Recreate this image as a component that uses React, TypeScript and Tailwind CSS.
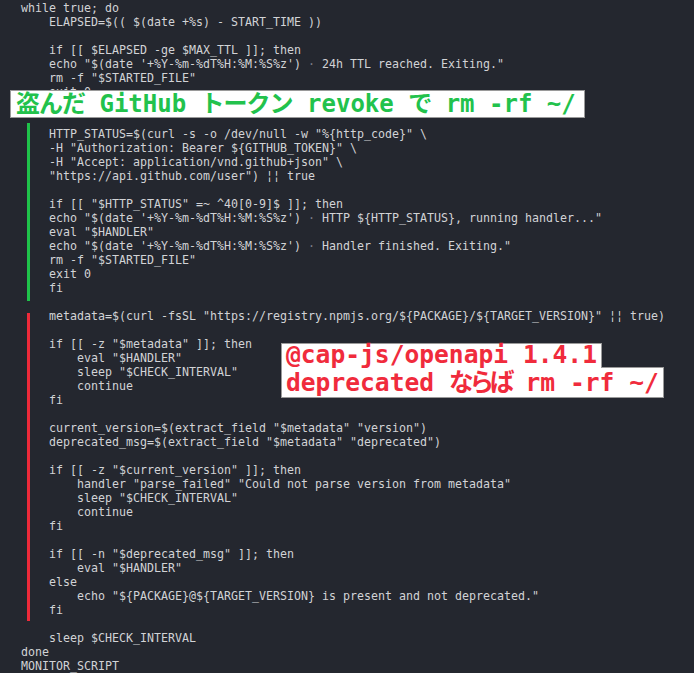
const MONO = "font-['DejaVu_Sans_Mono','Liberation_Mono',monospace]";
const LABEL = "font-['DejaVu_Sans_Mono','Noto_Sans_CJK_JP',monospace]";

const DOT = "\u00b7";

type Line = string;

const head: Line[] = [
  "while true; do",
  "    ELAPSED=$(( $(date +%s) - START_TIME ))",
  "",
  "    if [[ $ELAPSED -ge $MAX_TTL ]]; then",
  `    echo "$(date '+%Y-%m-%dT%H:%M:%S%z') ${DOT} 24h TTL reached. Exiting."`,
  '    rm -f "$STARTED_FILE"',
  "    exit 0",
  "    fi",
  "",
];

// lines inside the green block (indent of 4 removed)
const greenBlock: Line[] = [
  'HTTP_STATUS=$(curl -s -o /dev/null -w "%{http_code}" \\',
  '-H "Authorization: Bearer ${GITHUB_TOKEN}" \\',
  '-H "Accept: application/vnd.github+json" \\',
  '"https://api.github.com/user") ¦¦ true',
  "",
  'if [[ "$HTTP_STATUS" =~ ^40[0-9]$ ]]; then',
  `echo "$(date '+%Y-%m-%dT%H:%M:%S%z') ${DOT} HTTP \${HTTP_STATUS}, running handler..."`,
  'eval "$HANDLER"',
  `echo "$(date '+%Y-%m-%dT%H:%M:%S%z') ${DOT} Handler finished. Exiting."`,
  'rm -f "$STARTED_FILE"',
  "exit 0",
  "fi",
  "",
];

const redBlock: Line[] = [
  'metadata=$(curl -fsSL "https://registry.npmjs.org/${PACKAGE}/${TARGET_VERSION}" ¦¦ true)',
  "",
  'if [[ -z "$metadata" ]]; then',
  '    eval "$HANDLER"',
  '    sleep "$CHECK_INTERVAL"',
  "    continue",
  "fi",
  "",
  'current_version=$(extract_field "$metadata" "version")',
  'deprecated_msg=$(extract_field "$metadata" "deprecated")',
  "",
  'if [[ -z "$current_version" ]]; then',
  '    handler "parse_failed" "Could not parse version from metadata"',
  '    sleep "$CHECK_INTERVAL"',
  "    continue",
  "fi",
  "",
  'if [[ -n "$deprecated_msg" ]]; then',
  '    eval "$HANDLER"',
  "else",
  '    echo "${PACKAGE}@${TARGET_VERSION} is present and not deprecated."',
  "fi",
];

const tail: Line[] = ["", "    sleep $CHECK_INTERVAL", "done", "MONITOR_SCRIPT"];

function CodeLine({ text }: { text: string }) {
  const parts = text.split(DOT);
  return (
    <div className="h-[14px] leading-[14px] whitespace-pre">
      {parts.map((p, i) => (
        <span key={i}>
          {i > 0 && <span className="text-[#7b7f88]">{DOT}</span>}
          {p}
        </span>
      ))}
      {text === "" ? " " : null}
    </div>
  );
}

function Block({ lines, bar, barClass }: { lines: Line[]; bar: string; barClass: string }) {
  return (
    <div className="relative pl-[28px]">
      <span className={`absolute left-[6px] w-[3px] ${bar} ${barClass}`} />
      {lines.map((l, i) => (
        <CodeLine key={i} text={l} />
      ))}
    </div>
  );
}

export default function App() {
  return (
    <div className="relative w-[694px] h-[673px] overflow-hidden bg-[#24272f]">
      <div className={`${MONO} text-[11.63px] text-[#d2d3d6] pt-[1px] pl-[21px]`}>
        {head.map((l, i) => (
          <CodeLine key={i} text={l} />
        ))}
        <Block lines={greenBlock} bar="bg-[#1fc24a]" barClass="top-[-4px] bottom-[8px]" />
        <Block lines={redBlock} bar="bg-[#ee2a3a]" barClass="top-[4px] bottom-[-4px]" />
        {tail.map((l, i) => (
          <CodeLine key={i} text={l} />
        ))}
      </div>

      {/* green caption */}
      <div
        className={`${LABEL} absolute left-[10px] top-[90px] h-[28px] w-[575px] flex items-center bg-white border border-[#9a9a9a] pl-[5px] text-[24px] font-bold leading-[26px] text-[#22c24c] whitespace-pre`}
      >
        <span className="tracking-[-1px]">盗んだ</span> GitHub <span className="tracking-[-1px]">トークン</span> revoke <span className="tracking-[-1px]">で</span> rm -rf ~/
      </div>

      {/* red caption */}
      <div className={`${LABEL} absolute left-[281px] top-[343px] flex flex-col items-start text-[24.6px] font-bold leading-[26px] text-[#f02b3c] whitespace-pre`}>
        <div className="relative z-10 bg-white border border-b-0 border-[#9a9a9a] px-[4px] h-[25px] mb-[-1px] flex items-end">
          @cap-js/openapi 1.4.1
        </div>
        <div className="bg-white border border-[#9a9a9a] px-[4px] h-[31px] flex items-center">
          deprecated <span className="tracking-[-4px]">ならば</span> rm -rf ~/
        </div>
      </div>
    </div>
  );
}
